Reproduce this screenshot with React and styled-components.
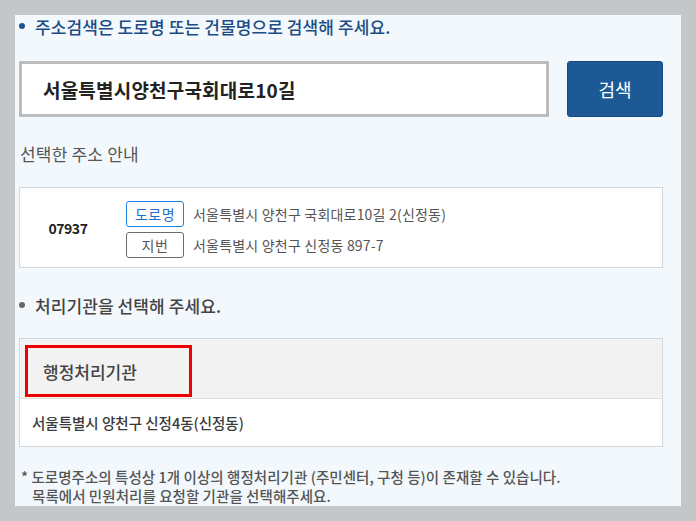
import React from "react";
import styled, { createGlobalStyle } from "styled-components";

const Global = createGlobalStyle`
  html, body { margin: 0; padding: 0; }
  body {
    background: #c4c7ca;
    font-family: "Noto Sans CJK KR", "Noto Sans", sans-serif;
    width: 696px;
    height: 521px;
    overflow: hidden;
  }
  * { box-sizing: border-box; }
`;

const Page = styled.div`
  padding: 15px 15px 0 15px;
`;

const Panel = styled.div`
  background: #f3f8fd;
  width: 666px;
  height: 491px;
  padding: 0 18px 1px 4px;
  display: flex;
  flex-direction: column;
`;

const Bullet = styled.div`
  display: flex;
  align-items: center;
  height: 22px;
  font-size: 17px;
  font-weight: 500;
  color: ${(p) => p.$color};
  margin-top: ${(p) => p.$mt || 0}px;
  letter-spacing: 0.1px;
  &::before {
    content: "";
    width: 6px;
    height: 6px;
    border-radius: 50%;
    background: ${(p) => p.$dot};
    margin: 0 10px 0 0;
    flex: none;
  }
`;

const SearchRow = styled.div`
  display: flex;
  gap: 18px;
  margin-top: 24px;
  height: 56px;
`;

const SearchInput = styled.div`
  flex: none;
  width: 530px;
  height: 56px;
  background: #fff;
  border: 3px solid #bcbcbc;
  display: flex;
  align-items: center;
  padding-left: 21px;
  font-size: 19px;
  font-weight: 700;
  color: #222;
  letter-spacing: 0.2px;
`;

const SearchButton = styled.button`
  flex: none;
  width: 96px;
  height: 56px;
  background: #1d5a95;
  border: 1px solid #124a82;
  border-radius: 3px;
  color: #fff;
  font-family: inherit;
  font-size: 18px;
  padding: 0;
`;

const SubTitle = styled.div`
  margin-top: 25px;
  height: 22px;
  display: flex;
  align-items: center;
  padding-left: 1px;
  font-size: 17px;
  color: #555;
  letter-spacing: 0.2px;
`;

const AddressBox = styled.div`
  margin-top: 23px;
  height: 81px;
  background: #fff;
  border: 1px solid #d2d5da;
  display: flex;
  align-items: center;
`;

const Zip = styled.div`
  width: 96px;
  text-align: center;
  font-size: 14px;
  font-weight: 700;
  color: #222;
  letter-spacing: -0.5px;
  flex: none;
`;

const AddrList = styled.div`
  margin-left: 10px;
  display: flex;
  flex-direction: column;
  gap: 5px;
  padding-top: 3px;
`;

const AddrLine = styled.div`
  display: flex;
  align-items: center;
  gap: 9px;
  font-size: 14px;
  color: #555;
  letter-spacing: 0.2px;
`;

const Badge = styled.span`
  width: 58px;
  height: 26px;
  border: 1px solid ${(p) => (p.$blue ? "#1c83e6" : "#6b6b6b")};
  color: ${(p) => (p.$blue ? "#1c6fd1" : "#555")};
  border-radius: 3px;
  background: #fff;
  display: inline-flex;
  align-items: center;
  justify-content: center;
  font-size: 14px;
  letter-spacing: 0.5px;
  flex: none;
`;

const Table = styled.div`
  margin-top: 22px;
  border: 1px solid #d2d5da;
  background: #fff;
`;

const HeadCell = styled.div`
  background: #f2f2f2;
  height: 60px;
  padding: 6px 0 0 5px;
  border-bottom: 1px solid #dedede;
`;

const Highlight = styled.div`
  width: 167px;
  height: 52px;
  border: 3px solid #ee0000;
  display: flex;
  align-items: center;
  padding-left: 15px;
  font-size: 17px;
  font-weight: 500;
  color: #444;
`;

const BodyCell = styled.div`
  height: 47px;
  display: flex;
  align-items: center;
  padding-left: 12px;
  font-size: 14.5px;
  font-weight: 500;
  color: #3a3a3a;
`;

const Note = styled.p`
  margin: 20px 0 0 0;
  padding-left: 13px;
  text-indent: -11px;
  font-size: 14.5px;
  line-height: 19px;
  font-weight: 500;
  color: #555;
  letter-spacing: 0.05px;
`;

export default function App() {
  return (
    <>
      <Global />
      <Page>
        <Panel>
          <Bullet $color="#1c4c85" $dot="#1d5592">
            주소검색은 도로명 또는 건물명으로 검색해 주세요.
          </Bullet>
          <SearchRow>
            <SearchInput>서울특별시양천구국회대로10길</SearchInput>
            <SearchButton>검색</SearchButton>
          </SearchRow>
          <SubTitle>선택한 주소 안내</SubTitle>
          <AddressBox>
            <Zip>07937</Zip>
            <AddrList>
              <AddrLine>
                <Badge $blue>도로명</Badge>
                서울특별시 양천구 국회대로10길 2(신정동)
              </AddrLine>
              <AddrLine>
                <Badge>지번</Badge>
                서울특별시 양천구 신정동 897-7
              </AddrLine>
            </AddrList>
          </AddressBox>
          <Bullet $color="#444" $dot="#666" $mt={26}>
            처리기관을 선택해 주세요.
          </Bullet>
          <Table>
            <HeadCell>
              <Highlight>행정처리기관</Highlight>
            </HeadCell>
            <BodyCell>서울특별시 양천구 신정4동(신정동)</BodyCell>
          </Table>
          <Note>
            * 도로명주소의 특성상 1개 이상의 행정처리기관 (주민센터, 구청 등)이 존재할 수 있습니다.
            <br />
            목록에서 민원처리를 요청할 기관을 선택해주세요.
          </Note>
        </Panel>
      </Page>
    </>
  );
}
